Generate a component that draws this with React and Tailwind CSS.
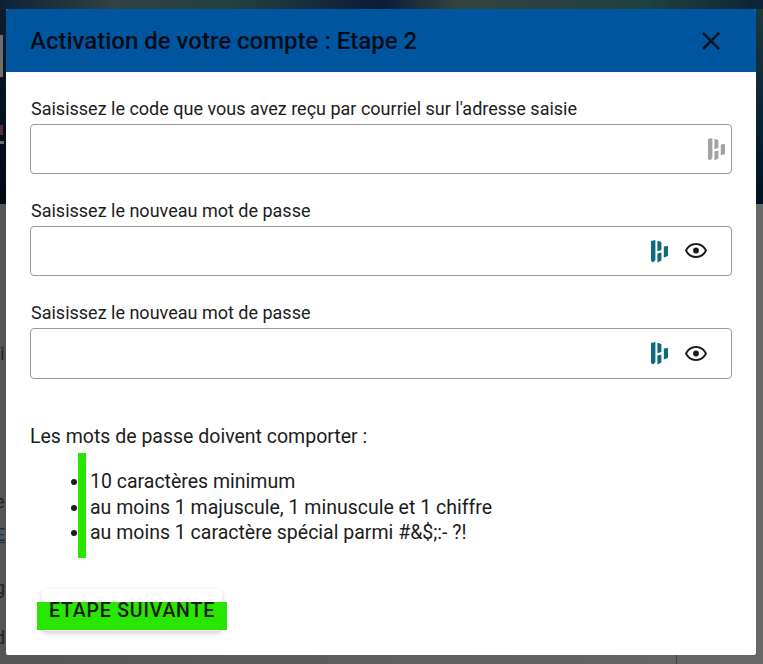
const fontRoboto = "font-['Roboto',sans-serif]";

function DashIcon({ className }) {
  return (
    <svg viewBox="0 0 17 23" className={className} fill="currentColor">
      <path d="M0 1 4.4 0V20L2.2 22.5 0 21Z" />
      <path d="M6.4 0.8 10.4 2V10L6.4 11.2Z" />
      <path d="M6.4 13.4 10.4 12.4V20.5L6.4 22.5Z" />
      <path d="M12.8 6.6 17 6V16L12.8 17.6Z" />
    </svg>
  );
}

function EyeIcon() {
  return (
    <svg viewBox="0 0 24 24" className="w-6 h-6 text-[#1a1a1a]" fill="currentColor">
      <path d="M12 6c3.79 0 7.17 2.13 8.82 5.5C19.17 14.87 15.79 17 12 17s-7.17-2.13-8.82-5.5C4.83 8.13 8.21 6 12 6m0-2C7 4 2.73 7.11 1 11.5 2.73 15.89 7 19 12 19s9.27-3.11 11-7.5C21.27 7.11 17 4 12 4z" />
      <circle cx="12" cy="11.5" r="2.9" />
    </svg>
  );
}

function Field({ label, eye, height = "h-[51px]" }) {
  return (
    <div>
      <label className="block pl-px text-[18px] leading-[20px] text-[#1c1c1c]">{label}</label>
      <div className={`mt-[5px] ${height} border border-[#9a9a9a] rounded flex items-center justify-end bg-white`}>
        {eye ? (
          <div className="flex items-center gap-[16px] pr-[23px]">
            <DashIcon className="w-[17px] h-[23px] text-[#0f6a80]" />
            <EyeIcon />
          </div>
        ) : (
          <DashIcon className="w-[17px] h-[23px] text-[#a3a3a3] mr-[6px]" />
        )}
      </div>
    </div>
  );
}

export default function App() {
  return (
    <div className={`relative w-[763px] h-[664px] overflow-hidden flex flex-col bg-gradient-to-r from-[#555555] to-[#686868] ${fontRoboto}`}>
      {/* page behind the overlay */}
      <div className="h-[204px] flex flex-col bg-gradient-to-b from-[#1d3a40] via-[#0b2735] to-[#03101f]">
        <div className="h-[9px] bg-[linear-gradient(to_right,#0d2236,#2f4244_15%,#24403f_30%,#0a1c3a_50%,#33443f_60%,#1e4040_85%,#0d2236)]" />
        <div className="flex-1 w-[6px] flex flex-col items-start pt-[26px] bg-gradient-to-b from-[#0d1c2c] to-[#020814]">
          <div className="w-[3px] h-[42px] bg-[#6f6f6f]" />
          <div className="mt-[48px] w-[3px] h-[10px] bg-[#5a2a3a]" />
          <div className="mt-[6px] w-[4px] h-[3px] bg-[#6f6f6f]" />
        </div>
      </div>
      <div className="flex-1 flex flex-col items-start pt-[136px] text-lg text-[#222]">
        <span className="-ml-[20px]">qui</span>
        <span className="mt-[120px] -ml-[5px]">e</span>
        <span className="mt-[5px] -ml-[5px] text-[#0d3050] underline">E</span>
        <span className="mt-[25px] -ml-[5px]">g</span>
        <span className="mt-[22px] -ml-[5px]">d</span>
        <div className="mt-auto ml-[676px] h-[9px] border-l border-[#3f3f3f]" />
      </div>

      {/* modal */}
      <div className="absolute left-[6px] top-[9px] w-[750px] h-[646px] bg-white rounded-[2px] overflow-hidden">
        <header className="h-[63px] bg-[#00559f] flex items-center justify-between pl-[24px] pr-[36px]">
          <h1 className="text-[24px] font-medium text-black/87">Activation de votre compte : Etape 2</h1>
          <svg viewBox="5 5 14 14" className="w-[18px] h-[18px] text-[#07121f]" fill="currentColor">
            <path d="M19 6.41 17.59 5 12 10.59 6.41 5 5 6.41 10.59 12 5 17.59 6.41 19 12 13.41 17.59 19 19 17.59 13.41 12z" />
          </svg>
        </header>

        <div className="px-[24px] pt-[27px]">
          <div className="flex flex-col gap-[27px]">
            <Field label="Saisissez le code que vous avez reçu par courriel sur l'adresse saisie" height="h-[50px]" />
            <Field label="Saisissez le nouveau mot de passe" height="h-[50px]" eye />
            <Field label="Saisissez le nouveau mot de passe" eye />
          </div>

          <p className="mt-[48px] text-[19.5px] leading-[20px] text-[#1c1c1c]">Les mots de passe doivent comporter :</p>

          <ul className="mt-[6px] ml-[48px] border-l-8 border-[#28e600] pl-[4px] pt-[16px] pb-[12px] list-disc text-[19.5px] leading-[25.7px] text-[#1c1c1c]">
            <li>10 caractères minimum</li>
            <li>au moins 1 majuscule, 1 minuscule et 1 chiffre</li>
            <li>au moins 1 caractère spécial parmi #&amp;$;:- ?!</li>
          </ul>

          <button className="mt-[31px] ml-[12px] block w-[180px] h-[42px] bg-white rounded shadow-[0_2px_5px_rgba(0,0,0,0.2)]">
            <span className="block -mx-[5px] mt-[12px] h-[28px] bg-[#28e600] text-[19.5px] leading-[18px] font-medium tracking-[0.8px] text-[#1c1c1c]">
              ETAPE SUIVANTE
            </span>
          </button>
        </div>
      </div>
    </div>
  );
}
